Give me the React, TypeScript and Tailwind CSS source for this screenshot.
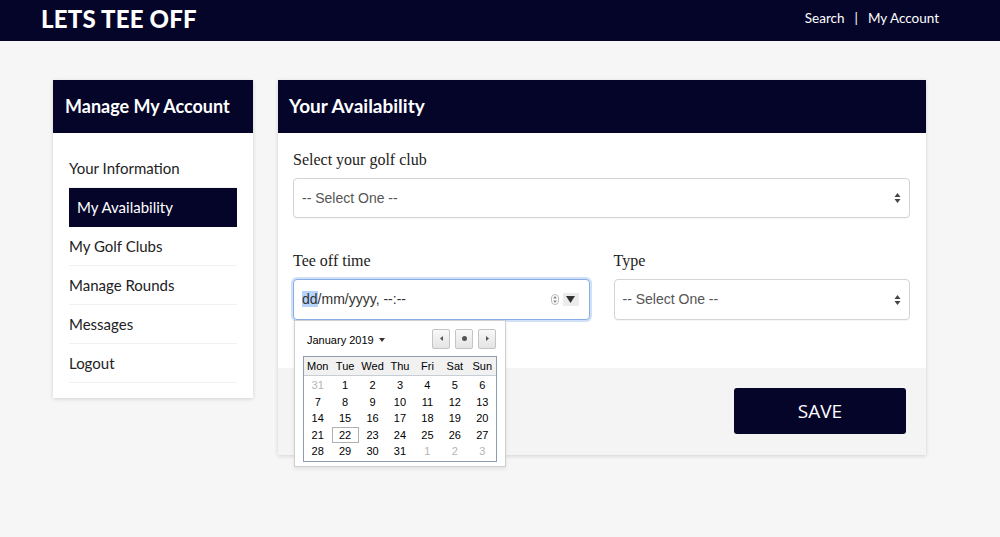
import React from 'react';

const navy = 'bg-[#05052a]';

const menu = ['Your Information', 'My Availability', 'My Golf Clubs', 'Manage Rounds', 'Messages', 'Logout'];

const weeks: [number, boolean][][] = [
  [[31, true], [1, false], [2, false], [3, false], [4, false], [5, false], [6, false]],
  [[7, false], [8, false], [9, false], [10, false], [11, false], [12, false], [13, false]],
  [[14, false], [15, false], [16, false], [17, false], [18, false], [19, false], [20, false]],
  [[21, false], [22, false], [23, false], [24, false], [25, false], [26, false], [27, false]],
  [[28, false], [29, false], [30, false], [31, false], [1, true], [2, true], [3, true]],
];

function UpDown() {
  return (
    <svg width="7" height="12" viewBox="0 0 7 12" className="text-[#444]">
      <path d="M3.5 1 L6.5 5 L0.5 5 Z" fill="currentColor" />
      <path d="M3.5 11 L6.5 7 L0.5 7 Z" fill="currentColor" />
    </svg>
  );
}

function FakeSelect({ tall }: { tall?: boolean }) {
  return (
    <div
      className={
        (tall ? 'h-[41px] ' : 'h-[40px] ') +
        'w-full rounded-[4px] border border-[#d4d4d4] bg-white flex items-center justify-between pl-[8px] pr-[8px] shadow-[0_1px_1px_rgba(0,0,0,0.04)]'
      }
    >
      <span className="text-[14px] text-[#555] font-['Liberation_Sans',Arial,sans-serif]">-- Select One --</span>
      <UpDown />
    </div>
  );
}

function NavBtn({ children }: { children: React.ReactNode }) {
  return (
    <div className="w-[18px] h-[20px] rounded-[2px] border border-[#c4c4c4] bg-gradient-to-b from-[#f8f8f8] to-[#e4e4e4] flex items-center justify-center">
      {children}
    </div>
  );
}

function DatePopup() {
  return (
    <div className="absolute left-[1px] top-full w-[212px] h-[147px] bg-white border border-[#cfcfcf] shadow-[0_2px_4px_rgba(0,0,0,0.08)] z-10 font-['Liberation_Sans',Arial,sans-serif] text-black">
      <div className="flex items-center justify-between pl-[12px] pr-[9px] pt-[7px] h-[28px]">
        <div className="flex items-center gap-[5px] text-[11px] pt-[3px]">
          <span>January 2019</span>
          <svg width="6" height="4" viewBox="0 0 6 4"><path d="M0 0 L6 0 L3 4 Z" fill="#333" /></svg>
        </div>
        <div className="flex gap-[5px]">
          <NavBtn>
            <svg width="3" height="5" viewBox="0 0 3 5"><path d="M3 0 L0 2.5 L3 5 Z" fill="#555" /></svg>
          </NavBtn>
          <NavBtn>
            <div className="w-[5px] h-[5px] rounded-full bg-[#555]" />
          </NavBtn>
          <NavBtn>
            <svg width="3" height="5" viewBox="0 0 3 5"><path d="M0 0 L3 2.5 L0 5 Z" fill="#555" /></svg>
          </NavBtn>
        </div>
      </div>
      <div className="mx-[8px] mt-[7px] border border-[#8d9cb0] text-[11px]">
        <div className="grid grid-cols-7 h-[19px] items-center bg-[#f1f1f1] border-b border-[#c8ced6] text-center">
          {['Mon', 'Tue', 'Wed', 'Thu', 'Fri', 'Sat', 'Sun'].map(d => (
            <span key={d}>{d}</span>
          ))}
        </div>
        <div className="pt-[1px] pb-[1px]">
          {weeks.map((w, i) => (
            <div key={i} className="grid grid-cols-7 h-[16.5px] items-center text-center">
              {w.map(([n, muted], j) => (
                <div key={j} className="flex justify-center">
                  <span
                    className={
                      (muted ? 'text-[#b5b5b5] ' : '') +
                      (n === 22 && !muted ? 'border border-[#b0b0b0] w-[27px] leading-[14px]' : '')
                    }
                  >
                    {n}
                  </span>
                </div>
              ))}
            </div>
          ))}
        </div>
      </div>
    </div>
  );
}

export default function App() {
  return (
    <div className="min-h-[537px] bg-[#f6f6f6] font-['Lato',sans-serif]">
      {/* Top bar */}
      <header className={`${navy} h-[41px] flex items-center justify-between pl-[41px] pr-[61px] pb-[4px]`}>
        <h1 className="text-white text-[24px] font-black tracking-[0.2px]">LETS TEE OFF</h1>
        <nav className="flex items-center text-white text-[13.5px]">
          <span>Search</span>
          <span className="mx-[10px] pb-[1px]">|</span>
          <span>My Account</span>
        </nav>
      </header>

      <div className="flex items-start gap-[25px] pl-[53px] pt-[39px]">
        {/* Sidebar */}
        <aside className="w-[200px] bg-white shadow-[0_1px_4px_rgba(0,0,0,0.15)]">
          <div className={`${navy} h-[53px] flex items-center px-[12px]`}>
            <h2 className="text-white text-[18px] font-bold">Manage My Account</h2>
          </div>
          <ul className="px-[16px] pt-[16px] pb-[15px] text-[15px] text-[#222]">
            {menu.map(item => {
              const active = item === 'My Availability';
              return (
                <li
                  key={item}
                  className={
                    'h-[39px] flex items-center ' +
                    (active ? `${navy} text-white px-[8px]` : 'border-b border-[#f2f2f2]')
                  }
                >
                  {item}
                </li>
              );
            })}
          </ul>
        </aside>

        {/* Main panel */}
        <section className="w-[648px] bg-white shadow-[0_1px_4px_rgba(0,0,0,0.15)]">
          <div className={`${navy} h-[53px] flex items-center px-[11px]`}>
            <h2 className="text-white text-[19px] font-bold">Your Availability</h2>
          </div>
          <div className="px-[15px] pr-[16px] pt-[17px] pb-[48px] font-['Liberation_Serif',serif] text-[16px] text-[#222]">
            <label className="block leading-[20px] mb-[8px]">Select your golf club</label>
            <FakeSelect />
            <div className="grid grid-cols-2 gap-[24px] mt-[33px]">
              <div>
                <label className="block leading-[20px] mb-[8px]">Tee off time</label>
                <div className="relative">
                  <div className="h-[41px] rounded-[4px] border border-[#87aee6] shadow-[0_0_0_2px_rgba(120,165,230,0.35)] bg-white flex items-center justify-between pl-[8px] pr-[10px] font-['Liberation_Sans',Arial,sans-serif] text-[14px] text-[#333]">
                    <span>
                      <span className="bg-[#b5d3fb]">dd</span>/mm/yyyy, --:--
                    </span>
                    <div className="flex items-center gap-[4px]">
                      <div className="w-[8px] h-[11px] rounded-full border border-[#bbb] flex flex-col items-center justify-center">
                        <svg width="4" height="7" viewBox="0 0 4 7"><path d="M2 0 L4 2.5 L0 2.5 Z M2 7 L4 4.5 L0 4.5 Z" fill="#888" /></svg>
                      </div>
                      <div className="w-[16px] h-[13px] bg-[#ececec] flex items-center justify-center">
                        <svg width="9" height="7" viewBox="0 0 9 7"><path d="M0 0 L9 0 L4.5 7 Z" fill="#333" /></svg>
                      </div>
                    </div>
                  </div>
                  <DatePopup />
                </div>
              </div>
              <div>
                <label className="block leading-[20px] mb-[8px]">Type</label>
                <FakeSelect tall />
              </div>
            </div>
          </div>
          <div className="bg-[#f4f4f4] h-[87px] flex justify-end items-start pt-[20px] pr-[20px]">
            <button className={`${navy} w-[172px] h-[46px] rounded-[3px] text-white text-[19px] font-['Open_Sans',sans-serif]`}>
              SAVE
            </button>
          </div>
        </section>
      </div>
    </div>
  );
}
